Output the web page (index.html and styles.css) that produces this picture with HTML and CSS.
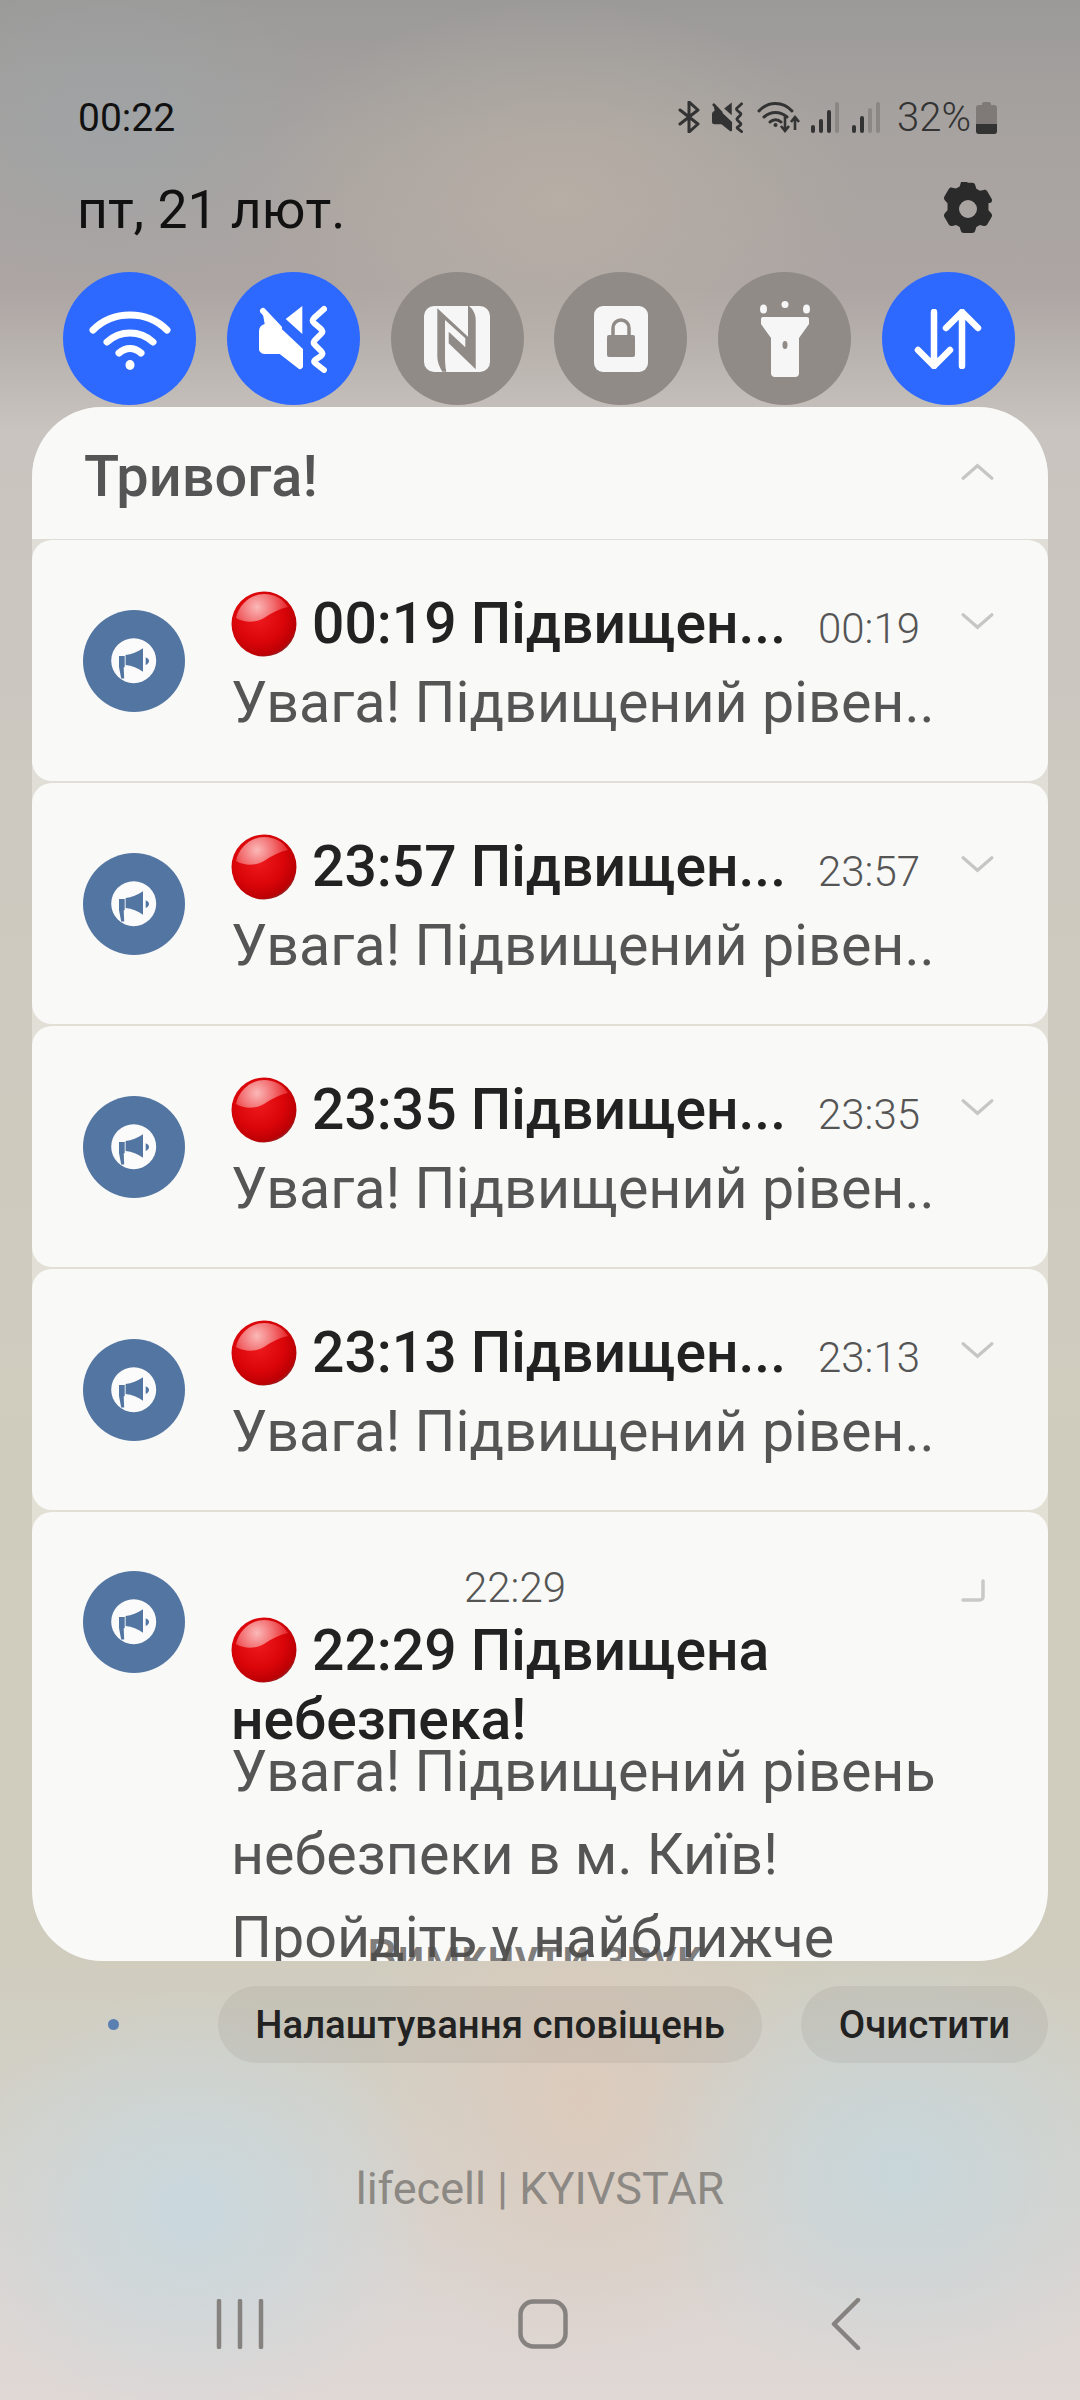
FILE: index.html
```html
<!DOCTYPE html>
<html>
<head>
    <title>Notification panel</title>
    <link rel="stylesheet" href="styles.css">
</head>
<body>
    <svg class="defs" width="0" height="0">
        <defs>
            <radialGradient id="ballFill" cx="0.42" cy="0.4" r="0.64">
                <stop offset="0" stop-color="#ee1a1e"/>
                <stop offset="0.6" stop-color="#da0509"/>
                <stop offset="0.9" stop-color="#bc0004"/>
                <stop offset="1" stop-color="#8e2a2a"/>
            </radialGradient>
            <radialGradient id="ballShine" gradientUnits="userSpaceOnUse" cx="26" cy="16" r="30">
                <stop offset="0" stop-color="#fbb8b8"/>
                <stop offset="0.55" stop-color="#f26e70"/>
                <stop offset="1" stop-color="#e8282c"/>
            </radialGradient>
            <symbol id="ball" viewBox="0 0 66 66">
                <circle cx="33" cy="33" r="32.5" fill="url(#ballFill)"/>
                <path d="M5 27C8 13 20 3 33 3c11 0 19 5 24 13-9 2-17 6-24 11-9 5-19 5-28 0z" fill="url(#ballShine)"/>
            </symbol>
            <symbol id="horn" viewBox="0 0 102 102">
                <circle cx="51" cy="51" r="51" fill="#5375a1"/>
                <circle cx="50.700" cy="50.700" r="22.500" fill="#fbfbfb"/>
                <path d="M36 46h5.700v11l-1 .5.5 11h-3L36 57z" fill="#5375a1"/>
                <path d="M42.600 45c6-.5 12-3 17.400-6.700v23.400c-5-3.500-11-6-17.400-6.700z" fill="#5375a1"/>
                <path d="M62.700 47.300c2 .7 3.300 2 3.300 3.700s-1.300 3-3.300 4z" fill="#5375a1"/>
            </symbol>
            <symbol id="chev-down" viewBox="0 0 36 20">
                <path d="M2 3l16 14L34 3" fill="none" stroke="#c6c6c4" stroke-width="3.5" stroke-linecap="round"/>
            </symbol>
            <symbol id="muted" viewBox="0 0 68 68">
                <path d="M3.300 5.700L44 44v17a3 3 0 0 1-4 3L20.700 49H5.700A6 6 0 0 1 0 41V27a8 8 0 0 1 5.700-8z" fill="currentColor"/>
                <path d="M4 6l16 17" stroke="currentColor" stroke-width="6" stroke-linecap="round"/>
                <path d="M26.700 14L43.300 1v28z" fill="currentColor"/>
                <path d="M65 4L55 13c-2 2-2 3 0 5l7 6c2 2 2 3 0 5l-6 6c-2 2-2 3 0 5l6 6c2 2 2 3 0 5l-6 4c-1 1-1 2 0 3l9 7" fill="none" stroke="currentColor" stroke-width="6" stroke-linecap="round" stroke-linejoin="round"/>
            </symbol>
        </defs>
    </svg>

    <div class="status-bar">
        <span class="clock">00:22</span>
        <div class="status-icons">
            <svg width="22" height="32" viewBox="0 0 22 32"><path d="M2 9l18 14-9 8V1l9 8L2 23" fill="none" stroke="#333" stroke-width="3" stroke-linejoin="round" stroke-linecap="round"/></svg>
            <svg class="icon-dark" width="31" height="31"><use href="#muted"/></svg>
            <svg class="wifi-small" width="44" height="34" viewBox="0 0 44 34"><path d="M2 11C11 1 26 1 35 11M7 17c7-6 16-6 23 0M13 22c3-3 8-3 11 0" fill="none" stroke="#333" stroke-width="3" stroke-linecap="round"/><circle cx="18.500" cy="25" r="2" fill="#333"/><path d="M28 16v14m-4-4l4 5 4-5M38 30V18m-4 4l4-5 4 5" fill="none" stroke="#333" stroke-width="2.6"/></svg>
            <svg width="28" height="32" viewBox="0 0 28 32"><rect x="0" y="24" width="4" height="8" rx="2" fill="#333"/><rect x="8" y="18" width="4" height="14" rx="2" fill="#333"/><rect x="16" y="9" width="4" height="23" rx="2" fill="#333"/><rect x="24" y="1" width="4" height="31" rx="2" fill="#8b8785"/></svg>
            <svg class="signal-2" width="28" height="32" viewBox="0 0 28 32"><rect x="0" y="24" width="4" height="8" rx="2" fill="#333"/><rect x="8" y="15" width="4" height="17" rx="2" fill="#333"/><rect x="16" y="7" width="4" height="25" rx="2" fill="#8b8785"/><rect x="24" y="1" width="4" height="31" rx="2" fill="#8b8785"/></svg>
            <span class="battery-text">32%</span>
            <svg width="21" height="33" viewBox="0 0 21 33"><path d="M6 3a2 2 0 0 1 2-2h5a2 2 0 0 1 2 2v1h3a3 3 0 0 1 3 3v23a3 3 0 0 1-3 3H3a3 3 0 0 1-3-3V7a3 3 0 0 1 3-3h3z" fill="#7f7a78"/><path d="M0 23h21v7a3 3 0 0 1-3 3H3a3 3 0 0 1-3-3z" fill="#333"/></svg>
        </div>
    </div>

    <div class="date-row">
        <span class="date">пт, 21 лют.</span>
        <svg width="54" height="54" viewBox="0 0 24 24"><path fill="#2a2a2a" fill-rule="evenodd" d="M12 0.300l1.800 0c.7 0 1.200.4 1.400 1l.5 1.700 1.600.9 1.700-.4c.6-.2 1.300.1 1.600.7l1.900 3.200c.3.600.2 1.300-.2 1.700L21.100 9.400v3.200l1.200 1.300c.4.400.5 1.100.2 1.700l-1.900 3.200c-.3.600-1 .9-1.600.7l-1.700-.4-1.600.9-.5 1.700c-.2.600-.7 1-1.400 1h-3.600c-.7 0-1.200-.4-1.400-1l-.5-1.700-1.600-.9-1.700.4c-.6.2-1.300-.1-1.600-.7L1.500 15.600c-.3-.6-.2-1.300.2-1.700l1.200-1.300V9.400L1.700 8.100c-.4-.4-.5-1.100-.2-1.700L3.400 3.200c.3-.6 1-.9 1.600-.7l1.700.4 1.600-.9.500-1.700c.2-.6.700-1 1.400-1zM12 8a4 4 0 1 0 0 8 4 4 0 0 0 0-8z"/></svg>
    </div>

    <div class="tiles">
        <div class="tile tile-on">
            <svg width="82" height="62" viewBox="0 0 82 62"><path d="M4 22C24 2 58 2 78 22M18 34c13-12 33-12 46 0M30 45c7-6 15-6 22 0" fill="none" stroke="#fff" stroke-width="7" stroke-linecap="round"/><ellipse cx="41" cy="57" rx="4.500" ry="5" fill="#fff"/></svg>
        </div>
        <div class="tile tile-on">
            <svg class="icon-light" width="68" height="68"><use href="#muted"/></svg>
        </div>
        <div class="tile">
            <svg width="66" height="66" viewBox="0 0 66 66"><rect width="66" height="66" rx="10" fill="#f6f6f6"/><path d="M13.300 2.300L44 30.700V0h1c4 3 6.700 8 6.700 14v49.300L24.700 37.300V25.700L41.300 41.300v-9L21 14v36.700c0 5 .3 10 1.300 15h-4c-3-5-5-10-5-15z" fill="#918b87"/></svg>
        </div>
        <div class="tile">
            <svg width="54" height="66" viewBox="0 0 54 66"><rect width="54" height="66" rx="9" fill="#f6f6f6"/><rect x="13" y="29" width="28" height="22" rx="2" fill="#918b87"/><path d="M19 30v-8a8 8 0 0 1 16 0v8" fill="none" stroke="#918b87" stroke-width="3.500"/></svg>
        </div>
        <div class="tile">
            <svg width="50" height="76" viewBox="0 0 50 76"><ellipse cx="3.500" cy="8" rx="3.500" ry="4.500" fill="#f6f6f6"/><ellipse cx="25" cy="3.500" rx="3.500" ry="3.500" fill="#f6f6f6"/><ellipse cx="46.500" cy="8" rx="3.500" ry="4.500" fill="#f6f6f6"/><path d="M3 16h44a2 2 0 0 1 2 2v5l-10 14v35a4 4 0 0 1-4 4H15a4 4 0 0 1-4-4V37L1 23v-5a2 2 0 0 1 2-2z" fill="#f6f6f6"/><ellipse cx="25" cy="44" rx="2.500" ry="4" fill="#918b87"/></svg>
        </div>
        <div class="tile tile-on">
            <svg width="68" height="60" viewBox="0 0 68 60"><path d="M20 3v54M4 41l16 16 16-16M48 57V3M32 19L48 3l16 16" fill="none" stroke="#fff" stroke-width="6.500" stroke-linecap="round" stroke-linejoin="round"/></svg>
        </div>
    </div>

    <div class="panel">
        <div class="panel-head">
            <h2>Тривога!</h2>
            <svg class="chev" width="33" height="18" viewBox="0 0 36 20"><path d="M2 17L18 3l16 14" fill="none" stroke="#c6c6c4" stroke-width="3.500" stroke-linecap="round"/></svg>
        </div>

        <div class="card">
            <svg class="app-icon"><use href="#horn"/></svg>
            <div class="card-body">
                <div class="title-row">
                    <svg class="ball"><use href="#ball"/></svg>
                    <span class="title">00:19 Підвищен...</span>
                    <span class="time">00:19</span>
                </div>
                <p class="msg">Увага! Підвищений рівен..</p>
            </div>
            <svg class="chev"><use href="#chev-down"/></svg>
        </div>
        <div class="card">
            <svg class="app-icon"><use href="#horn"/></svg>
            <div class="card-body">
                <div class="title-row">
                    <svg class="ball"><use href="#ball"/></svg>
                    <span class="title">23:57 Підвищен...</span>
                    <span class="time">23:57</span>
                </div>
                <p class="msg">Увага! Підвищений рівен..</p>
            </div>
            <svg class="chev"><use href="#chev-down"/></svg>
        </div>
        <div class="card">
            <svg class="app-icon"><use href="#horn"/></svg>
            <div class="card-body">
                <div class="title-row">
                    <svg class="ball"><use href="#ball"/></svg>
                    <span class="title">23:35 Підвищен...</span>
                    <span class="time">23:35</span>
                </div>
                <p class="msg">Увага! Підвищений рівен..</p>
            </div>
            <svg class="chev"><use href="#chev-down"/></svg>
        </div>
        <div class="card">
            <svg class="app-icon"><use href="#horn"/></svg>
            <div class="card-body">
                <div class="title-row">
                    <svg class="ball"><use href="#ball"/></svg>
                    <span class="title">23:13 Підвищен...</span>
                    <span class="time">23:13</span>
                </div>
                <p class="msg">Увага! Підвищений рівен..</p>
            </div>
            <svg class="chev"><use href="#chev-down"/></svg>
        </div>

        <div class="card card-open">
            <svg class="app-icon"><use href="#horn"/></svg>
            <div class="card-body">
                <span class="time time-open">22:29</span>
                <div class="title-row">
                    <svg class="ball"><use href="#ball"/></svg>
                    <span class="title">22:29 Підвищена</span>
                </div>
                <div class="title title-second">небезпека!</div>
                <p class="msg msg-open">Увага! Підвищений рівень<br>небезпеки в м. Київ!<br>Пройдіть у найближче</p>
            </div>
            <svg class="collapse" width="24" height="24" viewBox="0 0 24 24"><path d="M22 2v16a3 3 0 0 1-3 3H2" fill="none" stroke="#c9c9c7" stroke-width="3.500" stroke-linecap="round"/></svg>
        </div>
        <span class="mute-action">Вимкнути звук</span>
    </div>

    <div class="actions">
        <span class="page-dot"></span>
        <span class="pill pill-settings">Налаштування сповіщень</span>
        <span class="pill pill-clear">Очистити</span>
    </div>

    <div class="carrier">lifecell | KYIVSTAR</div>

    <div class="nav">
        <svg width="48" height="50" viewBox="0 0 48 50"><path d="M3 2v46M24 2v46M45 2v46" stroke="#858280" stroke-width="4.500" stroke-linecap="round"/></svg>
        <svg width="50" height="50" viewBox="0 0 50 50"><rect x="2.500" y="2.500" width="45" height="45" rx="13" fill="none" stroke="#858280" stroke-width="4.500"/></svg>
        <svg class="nav-back" width="30" height="52" viewBox="0 0 30 52"><path d="M27 2L3 26l24 24" fill="none" stroke="#858280" stroke-width="4.500" stroke-linecap="round" stroke-linejoin="round"/></svg>
    </div>
</body>
</html>
```

FILE: styles.css
```css
* {
    box-sizing: border-box;
}

html, body {
    margin: 0;
    padding: 0;
}

body {
    width: 1080px;
    height: 2400px;
    overflow: hidden;
    font-family: Roboto, "Noto Sans", sans-serif;
    color: #222;
    background-color: #cfcac4;
    background-image:
        radial-gradient(ellipse 240px 220px at 190px 2210px, #c9d8de 0%, rgba(201, 216, 222, 0) 100%),
        radial-gradient(ellipse 260px 220px at 900px 2170px, #c8d6da 0%, rgba(200, 214, 218, 0) 100%),
        radial-gradient(ellipse 240px 280px at 580px 2100px, #dccbbd 0%, rgba(220, 203, 189, 0) 100%),
        radial-gradient(ellipse 300px 200px at 560px 200px, rgba(186, 177, 166, 0.8) 0%, rgba(186, 177, 166, 0) 100%),
        radial-gradient(ellipse 240px 160px at 110px 130px, rgba(158, 163, 166, 0.8) 0%, rgba(158, 163, 166, 0) 100%),
        linear-gradient(180deg, #9b9a99 0%, #a8a3a0 6%, #aca5a3 12%, #c9c4bf 18%, #cdc9c0 35%, #d0ccbd 62%, #d0cdbf 82%, #d3d1c8 88%, #dcd6d3 96%, #e0d8d5 100%);
}

.defs {
    position: absolute;
}

.icon-dark {
    color: #333;
}

.icon-light {
    color: #fff;
}

.status-bar {
    display: flex;
    justify-content: space-between;
    align-items: center;
    height: 36px;
    margin: 99px 83px 0 78px;
}

.clock {
    padding-top: 2px;
    font-size: 39px;
    color: #111;
}

.status-icons {
    display: flex;
    align-items: center;
    gap: 12px;
    color: #333;
}

.wifi-small {
    margin-left: 2px;
    margin-right: -2px;
}

.signal-2 {
    margin-left: 1px;
}

.battery-text {
    font-size: 40px;
    margin-left: 5px;
    margin-right: -7px;
    font-weight: 300;
}

.date-row {
    display: flex;
    justify-content: space-between;
    align-items: center;
    height: 54px;
    margin: 47px 85px 0 77px;
}

.date {
    font-size: 53.5px;
    color: #111;
}

.tiles {
    display: flex;
    justify-content: space-between;
    margin: 36px 65px 0 63px;
}

.tile {
    display: flex;
    align-items: center;
    justify-content: center;
    width: 133px;
    height: 133px;
    border-radius: 50%;
    background: #918b87;
}

.tile-on {
    background: #2e69ff;
}

.panel {
    position: relative;
    display: flex;
    flex-direction: column;
    gap: 2px;
    height: 1554px;
    margin: 2px 32px 0;
    border-radius: 70px;
    background: rgba(240, 240, 234, 0.55);
    overflow: hidden;
}

.panel-head {
    display: flex;
    justify-content: space-between;
    align-items: center;
    height: 132px;
    margin-bottom: -1px;
    padding: 0 54px 0 52px;
    background: #f9f9f8;
}

.panel-head h2 {
    margin: 6px 0 0;
    font-size: 57.7px;
    font-weight: 500;
    color: #555;
}

.panel-head .chev {
    margin-top: -3px;
}

.card {
    display: flex;
    align-items: center;
    height: 241px;
    padding: 0 54px 0 51px;
    background: #f9f9f8;
    border-radius: 20px;
}

.app-icon {
    flex: none;
    width: 102px;
    height: 102px;
}

.card-body {
    flex: 1;
    min-width: 0;
    margin-left: 46px;
}

.title-row {
    display: flex;
    align-items: center;
    height: 66px;
    margin-top: 3px;
}

.ball {
    flex: none;
    width: 66px;
    height: 66px;
    margin-right: 15px;
}

.title {
    font-size: 57px;
    font-weight: 500;
    color: #222;
    white-space: nowrap;
}

.time {
    margin: 10px 0 0 32px;
    font-size: 42px;
    color: #555;
    font-weight: 300;
}

.msg {
    margin: 0;
    font-size: 57.4px;
    color: #555;
    white-space: nowrap;
}

.card .msg {
    margin-top: 15px;
    line-height: 62px;
}

.card > .chev {
    flex: none;
    width: 33px;
    height: 18px;
    margin-top: -80px;
}

.card-open {
    position: relative;
    align-items: flex-start;
    flex: 1;
    padding: 56px 52px 0 51px;
    border-radius: 20px 20px 70px 70px;
}

.card-open .app-icon {
    margin-top: 3px;
}

.time-open {
    display: block;
    margin: 0 0 0 233px;
    line-height: 40px;
}

.card-open .title-row {
    margin-top: 9px;
}

.title-second {
    line-height: 66px;
    margin-top: 4px;
}

.card .msg-open {
    margin-top: -23px;
    line-height: 83px;
}

.collapse {
    flex: none;
    margin: 11px 11px 0 0;
}

.mute-action {
    position: absolute;
    left: 335px;
    bottom: -20px;
    font-size: 48px;
    line-height: 48px;
    font-weight: 500;
    color: rgba(80, 78, 76, 0.72);
    white-space: nowrap;
}

.actions {
    display: flex;
    align-items: center;
    height: 77px;
    margin: 25px 32px 0 0;
}

.page-dot {
    width: 11px;
    height: 11px;
    margin-left: 108px;
    border-radius: 50%;
    background: #5b7fb0;
}

.pill {
    display: flex;
    align-items: center;
    justify-content: center;
    height: 77px;
    border-radius: 39px;
    background: rgba(120, 115, 105, 0.12);
    font-size: 38.4px;
    font-weight: 500;
    color: #222;
}

.pill-settings {
    width: 544px;
    margin-left: 99px;
}

.pill-clear {
    width: 247px;
    margin-left: 39px;
}

.carrier {
    margin-top: 100px;
    text-align: center;
    font-size: 45px;
    line-height: 52px;
    color: #8c8884;
}

.nav {
    display: flex;
    align-items: center;
    height: 52px;
    margin-top: 83px;
    padding-left: 216px;
    gap: 254px;
}

.nav-back {
    margin-left: 9px;
}
```
